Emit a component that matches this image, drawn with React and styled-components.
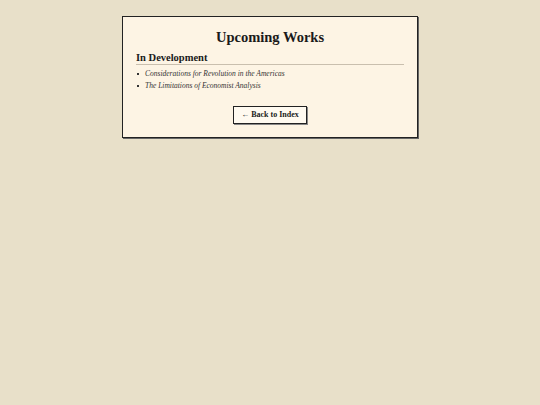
import React from "react";
import styled, { createGlobalStyle } from "styled-components";

const GlobalStyle = createGlobalStyle`
  html, body {
    margin: 0;
    padding: 0;
    background: #e8e0c9;
    font-family: Georgia, "Liberation Serif", "DejaVu Serif", serif;
    color: #1a1a1a;
  }
`;

const upcoming = [
  "Considerations for Revolution in the Americas",
  "The Limitations of Economist Analysis",
];

const App = () => {
  return (
    <>
      <GlobalStyle />
      <Page>
        <Card>
          <Title>Upcoming Works</Title>
          <Section>
            <SectionTitle>In Development</SectionTitle>
            <WorkList>
              {upcoming.map((w) => (
                <li key={w}>{w}</li>
              ))}
            </WorkList>
          </Section>
          <Footer>
            <BackButton href="#">← Back to Index</BackButton>
          </Footer>
        </Card>
      </Page>
    </>
  );
};

const Page = styled.div`
  width: 100%;
  min-height: 405px;
  display: flex;
  justify-content: center;
  align-items: flex-start;
  padding-top: 16px;
  box-sizing: border-box;
`;

const Card = styled.div`
  width: 296px;
  box-sizing: border-box;
  background: #fdf4e4;
  border: 1px solid #222;
  box-shadow: 1px 1px 0 #666;
  padding: 10px 13px 13px 13px;
`;

const Title = styled.h1`
  margin: 0 0 4px;
  text-align: center;
  font-size: 14.5px;
  font-weight: bold;
  line-height: 20px;
`;

const Section = styled.div`
  display: flex;
  flex-direction: column;
`;

const SectionTitle = styled.h2`
  margin: 0;
  font-size: 10.5px;
  font-weight: bold;
  line-height: 13px;
  padding-bottom: 0;
  border-bottom: 1px solid #c9bfae;
`;

const WorkList = styled.ul`
  margin: 3px 0 0;
  padding-left: 9px;
  list-style: none;
  li {
    position: relative;
    font-style: italic;
    font-size: 7.5px;
    line-height: 12px;
    color: #333;
  }
  li::before {
    content: "";
    position: absolute;
    left: -8px;
    top: 5px;
    width: 2px;
    height: 2px;
    background: #333;
  }
`;

const Footer = styled.div`
  display: flex;
  justify-content: center;
  margin-top: 14px;
`;

const BackButton = styled.a`
  display: inline-block;
  padding: 3px 7px;
  border: 1.5px solid #222;
  box-shadow: 1px 1px 0 #888;
  background: #fffaf0;
  color: #1a1a1a;
  text-decoration: none;
  font-weight: bold;
  font-size: 8px;
  line-height: 10px;
`;

export default App;
